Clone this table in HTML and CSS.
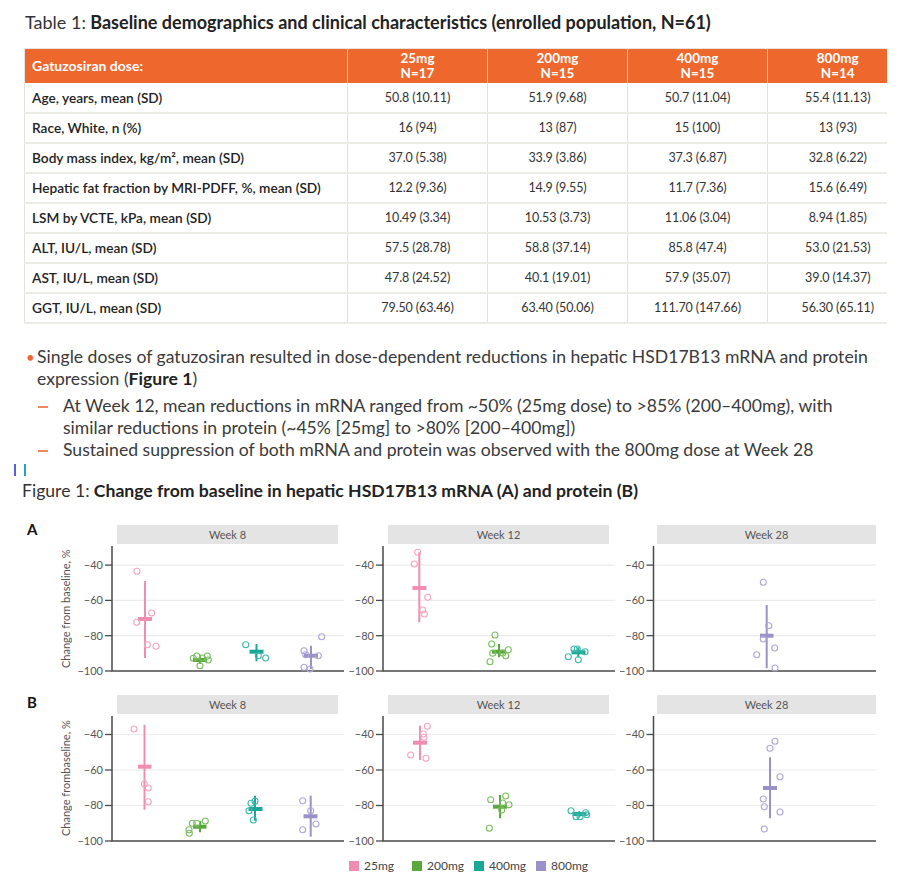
FILE: index.html
```html
<!DOCTYPE html>
<html lang="en">
<head>
<meta charset="utf-8">
<title>Baseline demographics and HSD17B13 change</title>
<link rel="stylesheet" href="styles.css">
</head>
<body>
<main class="page">
  <h1 class="table-title"><span class="lead">Table 1:</span> Baseline demographics and clinical characteristics (enrolled population, N=61)</h1>
  <div class="table-wrap">
    <table class="demo">
      <colgroup><col class="c-label"><col class="c-val"><col class="c-val"><col class="c-val"><col class="c-val"></colgroup>
      <thead>
        <tr><th class="lbl">Gatuzosiran dose:</th><th>25mg<br>N=17</th><th>200mg<br>N=15</th><th>400mg<br>N=15</th><th>800mg<br>N=14</th></tr>
      </thead>
      <tbody>
        <tr><td class="lbl">Age, years, mean (SD)</td><td>50.8 (10.11)</td><td>51.9 (9.68)</td><td>50.7 (11.04)</td><td>55.4 (11.13)</td></tr>
        <tr><td class="lbl">Race, White, n (%)</td><td>16 (94)</td><td>13 (87)</td><td>15 (100)</td><td>13 (93)</td></tr>
        <tr><td class="lbl">Body mass index, kg/m², mean (SD)</td><td>37.0 (5.38)</td><td>33.9 (3.86)</td><td>37.3 (6.87)</td><td>32.8 (6.22)</td></tr>
        <tr><td class="lbl">Hepatic fat fraction by MRI-PDFF, %, mean (SD)</td><td>12.2 (9.36)</td><td>14.9 (9.55)</td><td>11.7 (7.36)</td><td>15.6 (6.49)</td></tr>
        <tr><td class="lbl">LSM by VCTE, kPa, mean (SD)</td><td>10.49 (3.34)</td><td>10.53 (3.73)</td><td>11.06 (3.04)</td><td>8.94 (1.85)</td></tr>
        <tr><td class="lbl">ALT, IU/L, mean (SD)</td><td>57.5 (28.78)</td><td>58.8 (37.14)</td><td>85.8 (47.4)</td><td>53.0 (21.53)</td></tr>
        <tr><td class="lbl">AST, IU/L, mean (SD)</td><td>47.8 (24.52)</td><td>40.1 (19.01)</td><td>57.9 (35.07)</td><td>39.0 (14.37)</td></tr>
        <tr><td class="lbl">GGT, IU/L, mean (SD)</td><td>79.50 (63.46)</td><td>63.40 (50.06)</td><td>111.70 (147.66)</td><td>56.30 (65.11)</td></tr>
      </tbody>
    </table>
  </div>

  <ul class="bullets">
    <li class="item"><span class="dot">•</span>
      <div class="txt">Single doses of gatuzosiran resulted in dose-dependent reductions in hepatic HSD17B13 mRNA and protein expression (<b>Figure 1</b>)
        <ul class="sub">
          <li class="item"><span class="dash" aria-hidden="true"></span><span>At Week 12, mean reductions in mRNA ranged from ~50% (25mg dose) to &gt;85% (200–400mg), with similar reductions in protein (~45% [25mg] to &gt;80% [200–400mg])</span></li>
          <li class="item"><span class="dash" aria-hidden="true"></span><span>Sustained suppression of both mRNA and protein was observed with the 800mg dose at Week 28</span></li>
        </ul>
      </div>
    </li>
  </ul>

  <div class="marks"><span class="m m1"></span><span class="m m2"></span></div>

  <h2 class="fig-title"><span class="lead">Figure 1:</span> Change from baseline in hepatic HSD17B13 mRNA (A) and protein (B)</h2>

  <!-- Panel A -->
  <div class="fig-row">
    <div class="panel-label">A</div>
    <div class="ytitle">Change from baseline, %</div>
    <div class="panels">
      <svg class="panel" width="268" height="155" viewBox="78 522 268 155">
        <rect class="strip" x="117" y="526" width="221" height="19"/>
        <text class="strip-t" x="227.5" y="539.5">Week 8</text>
        <g class="grid"><line x1="112" x2="344" y1="566.1" y2="566.1"/><line x1="112" x2="344" y1="601.4" y2="601.4"/><line x1="112" x2="344" y1="636.7" y2="636.7"/></g>
        <g class="ticks"><line x1="105" x2="112" y1="566.1" y2="566.1"/><line x1="105" x2="112" y1="601.4" y2="601.4"/><line x1="105" x2="112" y1="636.7" y2="636.7"/><line x1="105" x2="112" y1="672" y2="672"/></g>
        <g class="tl"><text x="103" y="570">−40</text><text x="103" y="605.3">−60</text><text x="103" y="640.6">−80</text><text x="103" y="675.9">−100</text></g>
        <path class="axis" d="M112 547V672H344"/>
        <g class="pk"><line class="eb" x1="145" x2="145" y1="582" y2="659"/><line class="mn" x1="138" x2="152" y1="620" y2="620"/>
          <circle cx="137" cy="572.3" r="3"/><circle cx="136.7" cy="623.3" r="3"/><circle cx="151.7" cy="614" r="3"/><circle cx="147.3" cy="645.7" r="3"/><circle cx="156" cy="647.3" r="3"/></g>
        <g class="gr"><line class="eb" x1="200" x2="200" y1="655.7" y2="665"/><line class="mn" x1="193" x2="207" y1="661" y2="661"/>
          <circle cx="193.3" cy="659.3" r="3"/><circle cx="200" cy="666.7" r="3"/><circle cx="202.5" cy="659" r="3"/><circle cx="207.3" cy="657" r="3"/><circle cx="208.3" cy="661" r="3"/><circle cx="196.7" cy="657" r="3"/></g>
        <g class="tq"><line class="eb" x1="256.5" x2="256.5" y1="645" y2="662.3"/><line class="mn" x1="249.5" x2="263.5" y1="652.7" y2="652.7"/>
          <circle cx="245.7" cy="645.7" r="3"/><circle cx="265.7" cy="659" r="3"/><circle cx="258.3" cy="656.7" r="3"/></g>
        <g class="pu"><line class="eb" x1="311" x2="311" y1="646.7" y2="670"/><line class="mn" x1="304" x2="318" y1="656.7" y2="656.7"/>
          <circle cx="304" cy="651.7" r="3"/><circle cx="305.7" cy="655.7" r="3"/><circle cx="304" cy="668.3" r="3"/><circle cx="310" cy="670" r="3"/><circle cx="318.3" cy="656.7" r="3"/><circle cx="321.7" cy="637.7" r="3"/></g>
      </svg>
      <svg class="panel" width="268" height="155" viewBox="349 522 268 155">
        <rect class="strip" x="388" y="526" width="221" height="19"/>
        <text class="strip-t" x="498.5" y="539.5">Week 12</text>
        <g class="grid"><line x1="383" x2="615" y1="566.1" y2="566.1"/><line x1="383" x2="615" y1="601.4" y2="601.4"/><line x1="383" x2="615" y1="636.7" y2="636.7"/></g>
        <g class="ticks"><line x1="376" x2="383" y1="566.1" y2="566.1"/><line x1="376" x2="383" y1="601.4" y2="601.4"/><line x1="376" x2="383" y1="636.7" y2="636.7"/><line x1="376" x2="383" y1="672" y2="672"/></g>
        <g class="tl"><text x="374" y="570">−40</text><text x="374" y="605.3">−60</text><text x="374" y="640.6">−80</text><text x="374" y="675.9">−100</text></g>
        <path class="axis" d="M383 547V672H615"/>
        <g class="pk"><line class="eb" x1="419.3" x2="419.3" y1="553.3" y2="623.3"/><line class="mn" x1="412.5" x2="426.5" y1="589" y2="589"/>
          <circle cx="417.7" cy="553.3" r="3"/><circle cx="414.3" cy="565" r="3"/><circle cx="427.7" cy="598.3" r="3"/><circle cx="422.7" cy="611" r="3"/><circle cx="424.3" cy="615" r="3"/></g>
        <g class="gr"><line class="eb" x1="499" x2="499" y1="645" y2="658.3"/><line class="mn" x1="492" x2="506" y1="652.7" y2="652.7"/>
          <circle cx="495" cy="636" r="3"/><circle cx="491.7" cy="645" r="3"/><circle cx="492.7" cy="654.3" r="3"/><circle cx="490" cy="662.7" r="3"/><circle cx="508.3" cy="650.7" r="3"/><circle cx="505.7" cy="656.7" r="3"/><circle cx="502.7" cy="654" r="3"/></g>
        <g class="tq"><line class="eb" x1="578.3" x2="578.3" y1="648.3" y2="658.3"/><line class="mn" x1="571.5" x2="585.5" y1="653.3" y2="653.3"/>
          <circle cx="568.3" cy="657.7" r="3"/><circle cx="574" cy="650" r="3"/><circle cx="578.3" cy="660.7" r="3"/><circle cx="585" cy="652.7" r="3"/><circle cx="577.3" cy="650" r="3"/></g>
      </svg>
      <svg class="panel" width="268" height="155" viewBox="620 522 268 155">
        <rect class="strip" x="657" y="526" width="219" height="19"/>
        <text class="strip-t" x="766.5" y="539.5">Week 28</text>
        <g class="grid"><line x1="653.5" x2="876" y1="566.1" y2="566.1"/><line x1="653.5" x2="876" y1="601.4" y2="601.4"/><line x1="653.5" x2="876" y1="636.7" y2="636.7"/></g>
        <g class="ticks"><line x1="646.5" x2="653.5" y1="566.1" y2="566.1"/><line x1="646.5" x2="653.5" y1="601.4" y2="601.4"/><line x1="646.5" x2="653.5" y1="636.7" y2="636.7"/><line x1="646.5" x2="653.5" y1="672" y2="672"/></g>
        <g class="tl"><text x="644.5" y="570">−40</text><text x="644.5" y="605.3">−60</text><text x="644.5" y="640.6">−80</text><text x="644.5" y="675.9">−100</text></g>
        <path class="axis" d="M653.5 547V672H876"/>
        <g class="pu"><line class="eb" x1="766.7" x2="766.7" y1="606" y2="669.3"/><line class="mn" x1="760" x2="773.5" y1="636.7" y2="636.7"/>
          <circle cx="763.3" cy="583.3" r="3"/><circle cx="768.7" cy="626.7" r="3"/><circle cx="763.3" cy="640" r="3"/><circle cx="774.7" cy="649" r="3"/><circle cx="756.7" cy="655.7" r="3"/><circle cx="775" cy="669" r="3"/></g>
      </svg>
    </div>
  </div>

  <!-- Panel B -->
  <div class="fig-row fig-row-b">
    <div class="panel-label label-b">B</div>
    <div class="ytitle">Change frombaseline, %</div>
    <div class="panels">
      <svg class="panel" width="268" height="155" viewBox="78 692 268 155">
        <rect class="strip" x="117" y="696" width="221" height="19"/>
        <text class="strip-t" x="227.5" y="709.5">Week 8</text>
        <g class="grid"><line x1="112" x2="344" y1="735.5" y2="735.5"/><line x1="112" x2="344" y1="771" y2="771"/><line x1="112" x2="344" y1="806.5" y2="806.5"/></g>
        <g class="ticks"><line x1="105" x2="112" y1="735.5" y2="735.5"/><line x1="105" x2="112" y1="771" y2="771"/><line x1="105" x2="112" y1="806.5" y2="806.5"/><line x1="105" x2="112" y1="842" y2="842"/></g>
        <g class="tl"><text x="103" y="739.4">−40</text><text x="103" y="774.9">−60</text><text x="103" y="810.4">−80</text><text x="103" y="845.9">−100</text></g>
        <path class="axis" d="M112 717V842H344"/>
        <g class="pk"><line class="eb" x1="144.5" x2="144.5" y1="725.7" y2="810.7"/><line class="mn" x1="138" x2="151.5" y1="767.7" y2="767.7"/>
          <circle cx="134" cy="730" r="3"/><circle cx="144.3" cy="785" r="3"/><circle cx="148.3" cy="789" r="3"/><circle cx="148.3" cy="802.7" r="3"/></g>
        <g class="gr"><line class="eb" x1="200" x2="200" y1="821.7" y2="833.3"/><line class="mn" x1="193" x2="206.5" y1="827.7" y2="827.7"/>
          <circle cx="189" cy="830.7" r="3"/><circle cx="189.3" cy="834.3" r="3"/><circle cx="192.3" cy="824.3" r="3"/><circle cx="196.7" cy="824.3" r="3"/><circle cx="205.3" cy="822" r="3"/></g>
        <g class="tq"><line class="eb" x1="255" x2="255" y1="796.7" y2="821.7"/><line class="mn" x1="248.5" x2="262.5" y1="810" y2="810"/>
          <circle cx="249" cy="811.7" r="3"/><circle cx="251" cy="804.3" r="3"/><circle cx="255" cy="802.3" r="3"/><circle cx="253.3" cy="821" r="3"/></g>
        <g class="pu"><line class="eb" x1="310.7" x2="310.7" y1="796.7" y2="837.7"/><line class="mn" x1="303.5" x2="317.5" y1="817.3" y2="817.3"/>
          <circle cx="302.7" cy="801.7" r="3"/><circle cx="310.7" cy="811.7" r="3"/><circle cx="302.7" cy="830.7" r="3"/><circle cx="316" cy="825" r="3"/></g>
      </svg>
      <svg class="panel" width="268" height="155" viewBox="349 692 268 155">
        <rect class="strip" x="388" y="696" width="221" height="19"/>
        <text class="strip-t" x="498.5" y="709.5">Week 12</text>
        <g class="grid"><line x1="383" x2="615" y1="735.5" y2="735.5"/><line x1="383" x2="615" y1="771" y2="771"/><line x1="383" x2="615" y1="806.5" y2="806.5"/></g>
        <g class="ticks"><line x1="376" x2="383" y1="735.5" y2="735.5"/><line x1="376" x2="383" y1="771" y2="771"/><line x1="376" x2="383" y1="806.5" y2="806.5"/><line x1="376" x2="383" y1="842" y2="842"/></g>
        <g class="tl"><text x="374" y="739.4">−40</text><text x="374" y="774.9">−60</text><text x="374" y="810.4">−80</text><text x="374" y="845.9">−100</text></g>
        <path class="axis" d="M383 717V842H615"/>
        <g class="pk"><line class="eb" x1="420" x2="420" y1="726.7" y2="761"/><line class="mn" x1="413" x2="427" y1="743.7" y2="743.7"/>
          <circle cx="427.3" cy="727.3" r="3"/><circle cx="423.3" cy="735" r="3"/><circle cx="424" cy="738.3" r="3"/><circle cx="410.7" cy="756" r="3"/><circle cx="426" cy="759.3" r="3"/></g>
        <g class="gr"><line class="eb" x1="500" x2="500" y1="796" y2="819.3"/><line class="mn" x1="493" x2="507" y1="807.7" y2="807.7"/>
          <circle cx="490.7" cy="800.7" r="3"/><circle cx="505.7" cy="797" r="3"/><circle cx="509" cy="805.7" r="3"/><circle cx="501.7" cy="811" r="3"/><circle cx="489.3" cy="829.3" r="3"/><circle cx="502.7" cy="804" r="3"/></g>
        <g class="tq"><line class="eb" x1="579.3" x2="579.3" y1="812.3" y2="818.3"/><line class="mn" x1="572.5" x2="586.5" y1="815" y2="815"/>
          <circle cx="571" cy="811.7" r="3"/><circle cx="576" cy="817.7" r="3"/><circle cx="580" cy="817.7" r="3"/><circle cx="586.7" cy="815.7" r="3"/><circle cx="585.7" cy="813.7" r="3"/></g>
      </svg>
      <svg class="panel" width="268" height="155" viewBox="620 692 268 155">
        <rect class="strip" x="657" y="696" width="219" height="19"/>
        <text class="strip-t" x="766.5" y="709.5">Week 28</text>
        <g class="grid"><line x1="653.5" x2="876" y1="735.5" y2="735.5"/><line x1="653.5" x2="876" y1="771" y2="771"/><line x1="653.5" x2="876" y1="806.5" y2="806.5"/></g>
        <g class="ticks"><line x1="646.5" x2="653.5" y1="735.5" y2="735.5"/><line x1="646.5" x2="653.5" y1="771" y2="771"/><line x1="646.5" x2="653.5" y1="806.5" y2="806.5"/><line x1="646.5" x2="653.5" y1="842" y2="842"/></g>
        <g class="tl"><text x="644.5" y="739.4">−40</text><text x="644.5" y="774.9">−60</text><text x="644.5" y="810.4">−80</text><text x="644.5" y="845.9">−100</text></g>
        <path class="axis" d="M653.5 717V842H876"/>
        <g class="pu"><line class="eb" x1="770" x2="770" y1="758.3" y2="819.3"/><line class="mn" x1="763" x2="777" y1="789" y2="789"/>
          <circle cx="775" cy="742.3" r="3"/><circle cx="770" cy="749.3" r="3"/><circle cx="780" cy="777.7" r="3"/><circle cx="763.3" cy="800" r="3"/><circle cx="764.3" cy="807.7" r="3"/><circle cx="780" cy="813" r="3"/><circle cx="764.3" cy="830" r="3"/></g>
      </svg>
    </div>
  </div>

  <div class="legend">
    <span class="key"><i class="sw sw-pk"></i>25mg</span>
    <span class="key"><i class="sw sw-gr"></i>200mg</span>
    <span class="key"><i class="sw sw-tq"></i>400mg</span>
    <span class="key"><i class="sw sw-pu"></i>800mg</span>
  </div>
</main>
</body>
</html>
```
FILE: styles.css
```css
* { box-sizing: border-box; }
html, body { margin: 0; padding: 0; background: #fff; }
body { font-family: Lato, "Noto Sans", sans-serif; color: #333; }
.page { width: 914px; height: 886px; overflow: hidden; }

.table-title {
  margin: 0;
  padding: 12px 0 0 25px;
  font-size: 18px;
  line-height: 21px;
  font-weight: 700;
  color: #222;
}
.lead { font-weight: 400; color: #333; }

.table-wrap { margin: 15px 0 0 24px; width: 863px; overflow: hidden; }
.demo { width: 883px; table-layout: fixed; border-collapse: collapse; font-size: 12.5px; letter-spacing: -0.1px; color: #333; }
.c-label { width: 323px; }
.c-val { width: 140px; }
.demo thead th {
  background: #ee682d;
  color: #fff;
  height: 34px;
  padding: 0;
  font-size: 13.5px;
  font-weight: 700;
  line-height: 15px;
  letter-spacing: 0;
  text-align: center;
  border-left: 1px solid #f3c6ad;
  border-top: 1px solid #e4e4e0;
}
.demo th.lbl { text-align: left; padding-left: 7px; font-size: 14px; border-left: 1px solid #e4e4e0; }
.demo tbody td {
  height: 30px;
  padding: 0;
  text-align: center;
  border-bottom: 2px solid #ecece7;
  border-left: 1px solid #e2e2dd;
}
.demo td.lbl { text-align: left; padding-left: 7px; font-size: 13.7px; letter-spacing: 0; font-weight: 600; color: #222; }

.bullets {
  list-style: none;
  margin: 22px 0 0;
  padding: 0 0 0 26px;
  width: 880px;
  font-size: 17.6px;
  line-height: 22px;
  color: #3a3a3a;
}
.bullets b { font-weight: 700; color: #222; }
.item { display: flex; }
.dot { flex: none; width: 11px; color: #ee682d; font-size: 15px; }
.txt { flex: 1; }
.sub { list-style: none; margin: 5px 0 0; padding: 0 0 0 1px; }
.dash { flex: none; width: 25px; }
.dash::before { content: ""; display: block; width: 10px; height: 2px; margin-top: 11px; background: #f0875a; }

.marks { display: flex; gap: 8px; margin-top: 3px; padding-left: 14px; height: 12px; }
.m { width: 2px; height: 12px; }
.m1 { background: #5a5fd6; }
.m2 { background: #1fa6c4; }

.fig-title {
  margin: 5px 0 0;
  padding-left: 22px;
  font-size: 17.6px;
  line-height: 20px;
  font-weight: 700;
  color: #222;
}

.fig-row { display: flex; margin-top: 20px; height: 155px; }
.fig-row-b { margin-top: 15px; }
.panel-label {
  width: 27px;
  margin-left: 27px;
  font-size: 15px;
  line-height: 16px;
  font-weight: 700;
  color: #111;
}
.label-b { padding-top: 3px; }
.ytitle {
  width: 24px;
  height: 125px;
  margin-top: 25px;
  writing-mode: vertical-rl;
  transform: rotate(180deg);
  text-align: center;
  font-size: 11px;
  line-height: 24px;
  color: #555;
  white-space: nowrap;
}
.panels { display: flex; gap: 3px; }
.panel { display: block; overflow: hidden; }

.strip { fill: #e4e4e4; }
.strip-t { font-family: Lato, "Noto Sans", sans-serif; font-size: 11px; fill: #555; text-anchor: middle; }
.grid line { stroke: #ececec; stroke-width: 1.2; }
.ticks line { stroke: #4a4a4a; stroke-width: 1.3; }
.tl text { font-family: Lato, "Noto Sans", sans-serif; font-size: 11px; fill: #555; text-anchor: end; }
.axis { fill: none; stroke: #4a4a4a; stroke-width: 1.5; }

.eb { stroke-width: 2; }
.mn { stroke-width: 4; }
circle { fill: none; stroke-width: 1.1; }
.pk line { stroke: #f08db1; }
.pk circle { stroke: #f4a5c1; }
.gr line { stroke: #5aa83c; }
.gr circle { stroke: #7bbd61; }
.tq line { stroke: #19a898; }
.tq circle { stroke: #3fb8aa; }
.pu line { stroke: #9a91c8; }
.pu circle { stroke: #aea6d6; }

.legend {
  display: flex;
  gap: 10px;
  margin-top: 14px;
  padding-left: 349px;
  font-size: 12px;
  line-height: 12px;
  color: #444;
}
.key { display: flex; align-items: center; gap: 5px; }
.key:first-child { margin-right: 8px; }
.sw { display: block; width: 10px; height: 10px; }
.sw-pk { background: #f08db1; }
.sw-gr { background: #5aa83c; }
.sw-tq { background: #19a898; }
.sw-pu { background: #9a91c8; }
```
